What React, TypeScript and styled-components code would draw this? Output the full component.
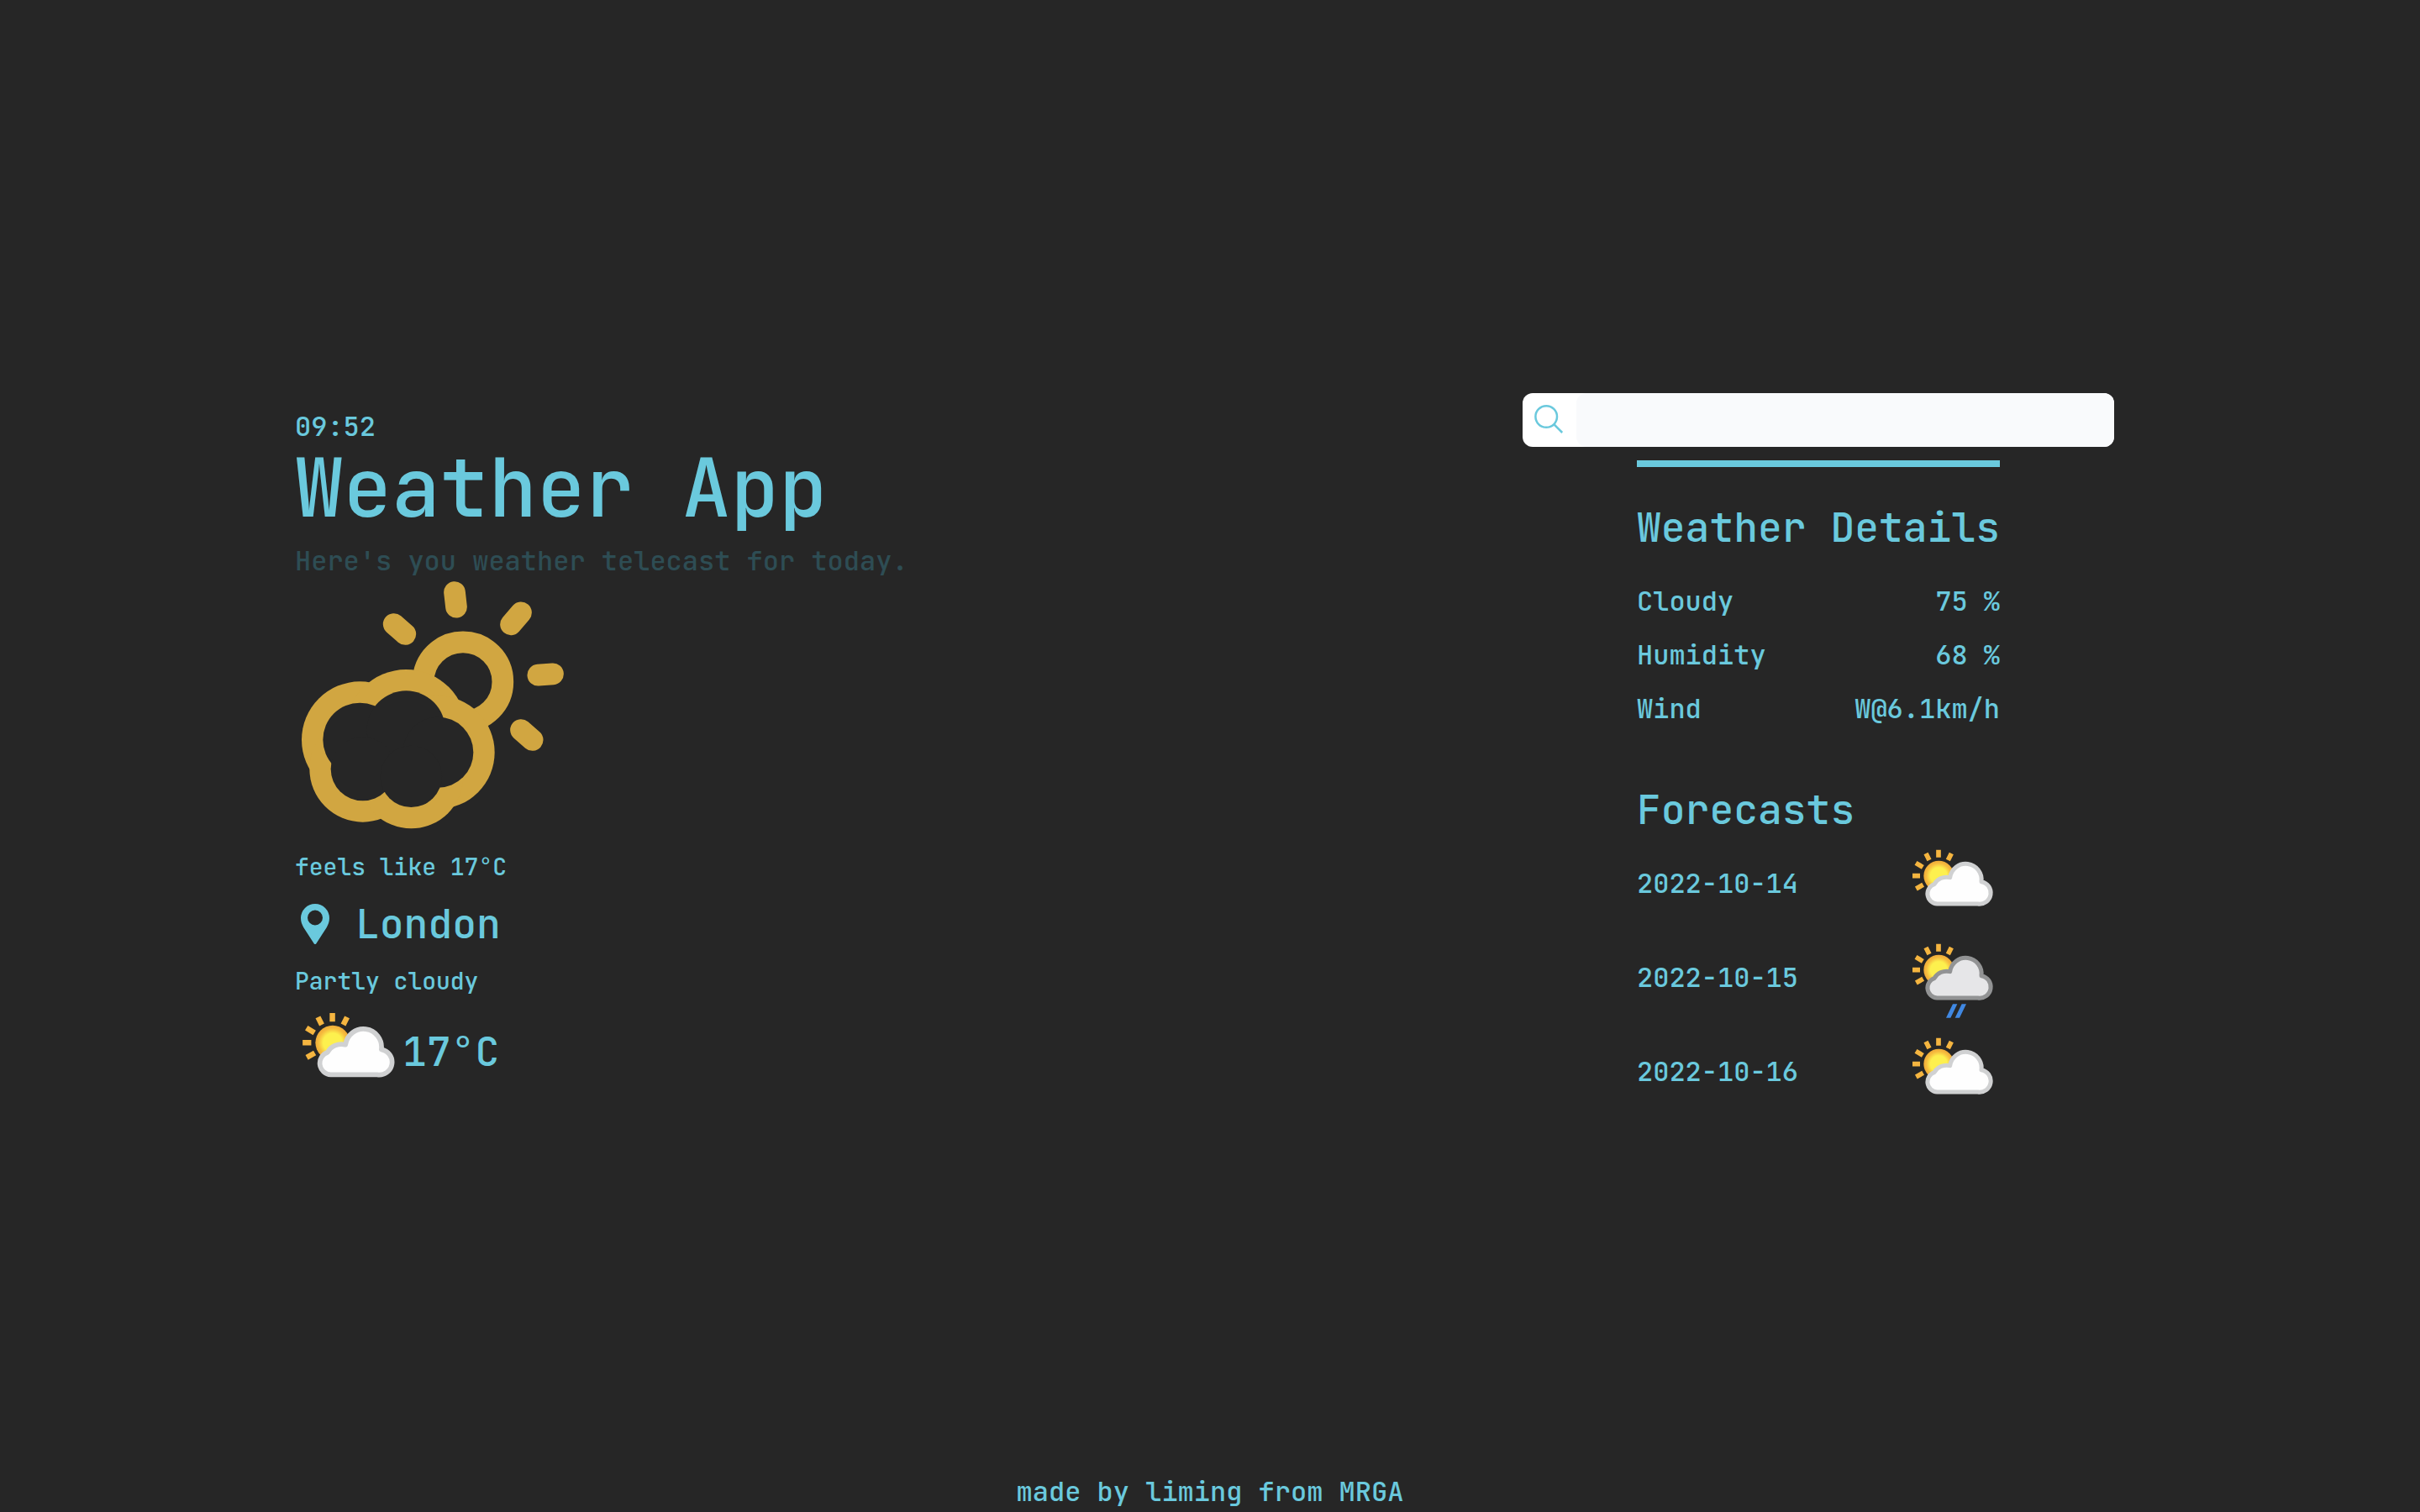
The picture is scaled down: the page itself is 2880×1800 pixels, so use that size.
import React from "react";
import styled, { createGlobalStyle } from "styled-components";

const color = {
  background: "#262626",
  accent: "#6ac9dd",
  muted: "#2e4d54",
  gold: "#d1a641",
  field: "#f9fafc",
};

const GlobalStyle = createGlobalStyle`
  *, *::before, *::after { box-sizing: border-box; }
  body {
    margin: 0;
    background: ${color.background};
    color: ${color.accent};
    font-family: "JetBrains Mono", "DejaVu Sans Mono", "Liberation Mono", monospace;
    font-size: 32px;
    font-weight: 500;
    line-height: 48px;
  }
`;

const Page = styled.div`
  display: grid;
  grid-template-rows: 1fr auto 1fr;
  min-height: 100vh;
`;

const Main = styled.main`
  grid-row: 2;
  display: flex;
  flex-wrap: wrap;
  align-items: center;
  justify-content: space-between;
  padding: 0 364px 0 351px;
`;

const Current = styled.section`
  display: flex;
  flex-direction: column;
`;

const AppTitle = styled.h1`
  margin: 0 0 14px;
  font-size: 96px;
  font-weight: 500;
  line-height: 98px;
`;

const Tagline = styled.p`
  margin: 0;
  color: ${color.muted};
`;

const HeroIcon = styled.svg`
  display: block;
  width: 320px;
  height: 320px;
`;

const Note = styled.p`
  margin: 0;
  font-size: 28px;
  line-height: 40px;
`;

const Place = styled.h2`
  display: flex;
  align-items: center;
  gap: 24px;
  margin: 16px 0;
  font-size: 48px;
  font-weight: 500;
  line-height: 64px;
`;

const PinIcon = styled.svg`
  width: 48px;
  height: 48px;
`;

const Temperature = styled.div`
  display: flex;
  align-items: center;
  font-size: 48px;
  line-height: 64px;
`;

const ConditionSvg = styled.svg<{ $size: number }>`
  display: block;
  width: ${(p) => p.$size}px;
  height: ${(p) => p.$size}px;
`;

const Side = styled.section`
  display: flex;
  flex-direction: column;
  align-items: center;
  gap: 16px;
  width: 704px;
  max-width: 100%;
`;

const SearchForm = styled.form`
  display: flex;
  width: 100%;
  height: 64px;
  border-radius: 12px;
  background: #fff;
`;

const SearchLabel = styled.label`
  flex: none;
  width: 64px;
  cursor: pointer;
`;

const SearchIcon = styled.svg`
  display: block;
  width: 64px;
  height: 64px;
`;

const SearchInput = styled.input`
  flex: 1;
  min-width: 0;
  padding: 0 16px;
  border: 0;
  border-radius: 12px;
  outline: none;
  background: ${color.field};
  color: ${color.background};
  font: inherit;
`;

const Panel = styled.div`
  padding-top: 40px;
  border-top: 8px solid ${color.accent};
`;

const PanelTitle = styled.h2`
  margin: 0;
  font-size: 48px;
  font-weight: 500;
  line-height: 64px;
`;

const DetailList = styled.dl`
  display: flex;
  flex-direction: column;
  gap: 16px;
  margin: 32px 0 64px;
`;

const DetailRow = styled.div`
  display: flex;
  justify-content: space-between;
`;

const DetailValue = styled.dd`
  margin: 0;
`;

const ForecastList = styled.ul`
  margin: 0;
  padding: 0;
  list-style: none;
`;

const ForecastRow = styled.li`
  display: flex;
  align-items: center;
  justify-content: space-between;
`;

const Footer = styled.footer`
  grid-row: 3;
  align-self: end;
  text-align: center;
`;

type Condition = "partly-cloudy" | "patchy-rain";

function ConditionIcon({ condition, size }: { condition: Condition; size: number }) {
  const rainy = condition === "patchy-rain";
  const id = React.useId();
  return (
    <ConditionSvg
      $size={size}
      viewBox="1014 288 336 336"
      role="img"
      aria-label={rainy ? "Patchy rain possible" : "Partly cloudy"}
    >
      <defs>
        <radialGradient id={id}>
          <stop offset="0.55" stopColor="#fdf04e" />
          <stop offset="0.82" stopColor="#f6bc3f" />
          <stop offset="1" stopColor="#f0ab38" />
        </radialGradient>
      </defs>
      <path
        d="M1131 335V362M1086 348L1098 372M1177 348L1165 372M1050 382L1075 397M1038 428H1065M1051 474L1076 460"
        stroke="#f5b540"
        strokeWidth="17"
      />
      <circle cx="1132" cy="428" r="54" fill={`url(#${id})`} />
      <path
        d="M1126 528A36 36 0 0 1 1116 458A48 44 0 0 1 1172 434A56 56 0 0 1 1284 449A40 40 0 0 1 1271 528Z"
        fill={rainy ? "#e6e6e8" : "#fefefe"}
        stroke={rainy ? "#929394" : "#d0d1d2"}
        strokeWidth="15"
        strokeLinejoin="round"
      />
      {rainy && <path d="M1182 550h16l-24 49h-16zM1214 550h16l-24 49h-16z" fill="#4088e2" />}
    </ConditionSvg>
  );
}

const cloudLobes = [
  { cx: 265, cy: 602, r: 170 },
  { cx: 430, cy: 567, r: 178 },
  { cx: 544, cy: 647, r: 164 },
  { cx: 275, cy: 706, r: 152 },
  { cx: 448, cy: 733, r: 148 },
];

function SunCloud() {
  return (
    <HeroIcon viewBox="33 36 960 960" aria-hidden="true">
      <path
        d="M603 75L609 128M840 148L804 190M901 371L954 367M840 567L881 603M386 189L427 225"
        stroke={color.gold}
        strokeWidth="77"
        strokeLinecap="round"
      />
      <circle cx="633" cy="395" r="142" fill="none" stroke={color.gold} strokeWidth="77" />
      {cloudLobes.map((lobe) => (
        <circle key={lobe.cx} cx={lobe.cx} cy={lobe.cy} r={lobe.r + 38} fill={color.gold} />
      ))}
      {cloudLobes.map((lobe) => (
        <circle key={lobe.cx} cx={lobe.cx} cy={lobe.cy} r={lobe.r - 38} fill={color.background} />
      ))}
    </HeroIcon>
  );
}

const details = [
  { label: "Cloudy", value: "75 %" },
  { label: "Humidity", value: "68 %" },
  { label: "Wind", value: "W@6.1km/h" },
];

const forecasts: { date: string; condition: Condition }[] = [
  { date: "2022-10-14", condition: "partly-cloudy" },
  { date: "2022-10-15", condition: "patchy-rain" },
  { date: "2022-10-16", condition: "partly-cloudy" },
];

export default function App() {
  return (
    <Page>
      <GlobalStyle />
      <Main>
        <Current>
          <time dateTime="09:52">09:52</time>
          <AppTitle>Weather App</AppTitle>
          <Tagline>Here's you weather telecast for today.</Tagline>
          <SunCloud />
          <Note>feels like 17°C</Note>
          <Place>
            <PinIcon viewBox="-1 0 48 48" aria-hidden="true">
              <path
                fill="currentColor"
                fillRule="evenodd"
                d="M23 0A17 17 0 0 0 6 17C6 21 7.300 24.500 9.200 28L21.800 47.400Q23 48.600 24.200 47.400L36.800 28C38.700 24.500 40 21 40 17A17 17 0 0 0 23 0ZM23 7.500A9 9 0 1 1 23 25.500A9 9 0 1 1 23 7.500Z"
              />
            </PinIcon>
            London
          </Place>
          <Note>Partly cloudy</Note>
          <Temperature>
            <ConditionIcon condition="partly-cloudy" size={128} />
            17°C
          </Temperature>
        </Current>

        <Side>
          <SearchForm role="search" onSubmit={(e) => e.preventDefault()}>
            <SearchLabel htmlFor="city">
              <SearchIcon viewBox="0 0 64 64" fill="none" stroke={color.accent} strokeWidth="2.500" aria-hidden="true">
                <circle cx="28.200" cy="28" r="12.800" />
                <path d="M37.200 37L47.200 47" />
              </SearchIcon>
            </SearchLabel>
            <SearchInput id="city" type="text" aria-label="Search for a city" />
          </SearchForm>
          <Panel>
            <PanelTitle>Weather Details</PanelTitle>
            <DetailList>
              {details.map((item) => (
                <DetailRow key={item.label}>
                  <dt>{item.label}</dt>
                  <DetailValue>{item.value}</DetailValue>
                </DetailRow>
              ))}
            </DetailList>
            <PanelTitle>Forecasts</PanelTitle>
            <ForecastList>
              {forecasts.map((day) => (
                <ForecastRow key={day.date}>
                  <time dateTime={day.date}>{day.date}</time>
                  <ConditionIcon condition={day.condition} size={112} />
                </ForecastRow>
              ))}
            </ForecastList>
          </Panel>
        </Side>
      </Main>
      <Footer>made by liming from MRGA</Footer>
    </Page>
  );
}
